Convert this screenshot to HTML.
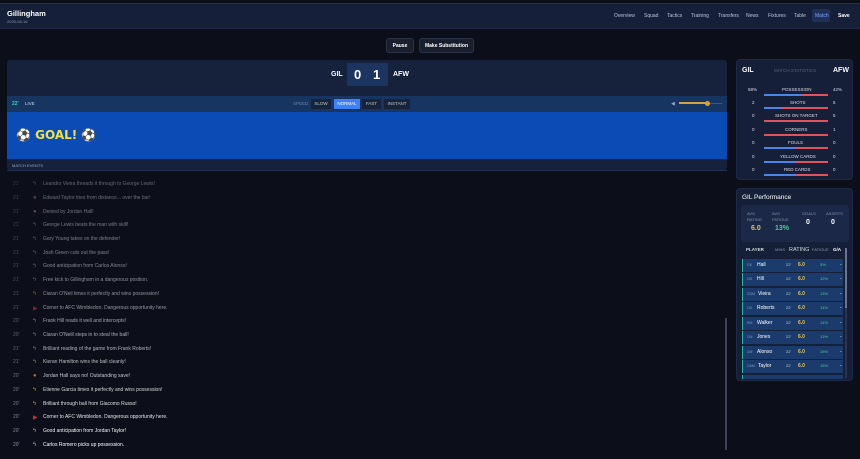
<!DOCTYPE html>
<html><head><style>
*{margin:0;padding:0;box-sizing:border-box}
body{width:860px;height:459px;background:#0c0f1a;font-family:"Liberation Sans",sans-serif;color:#fff;position:relative;overflow:hidden;font-size:5px}
.abs{position:absolute}
.hdr{left:0;top:3px;width:860px;height:26px;background:#161f38;border-top:1px solid #22304f;border-bottom:1px solid #1d2742}
.nav{position:absolute;top:9px;font-size:5px;color:#b8c3d8}
.btn{top:38px;height:15px;background:#1a1f2e;border:1px solid #2a3246;border-radius:3px;font-size:5px;font-weight:bold;text-align:center;line-height:14px}
.main{left:7px;top:60px;width:720px;height:110px;background:#16213b;border-radius:3px}
.ev{position:absolute;left:13px;font-size:5px;white-space:nowrap}
.ev .t{position:absolute;left:0;color:#8a93a6}
.ev .i{position:absolute;left:20px;color:#d9b04a;font-size:6px}
.ev .x{position:absolute;left:30px}
.panel{background:#161f38;border-radius:4px;border:1px solid #1f2a45}
.st{position:absolute;left:0;width:117px;font-size:4.5px;color:#dde}
.bar{position:absolute;left:27px;width:64px;height:2px;background:#e0525e}
.bar i{display:block;height:2px;background:#4a86e8}
.pr{position:absolute;left:5px;width:101px;height:13px;background:#1b3b6c;border-left:1px solid #2bb59c;font-size:5px}
</style></head><body>
<div class="abs hdr">
<div class="abs" style="left:7px;top:5px;font-size:7.5px;font-weight:bold">Gillingham</div>
<div class="abs" style="left:7px;top:15px;font-size:4px;color:#8a93a6">2025-08-16</div>
<span class="nav" style="left:614px">Overview</span><span class="nav" style="left:644px">Squad</span><span class="nav" style="left:667px">Tactics</span><span class="nav" style="left:691px">Training</span><span class="nav" style="left:718px">Transfers</span><span class="nav" style="left:746px">News</span><span class="nav" style="left:768px">Fixtures</span><span class="nav" style="left:794px">Table</span>
<div class="abs" style="left:812px;top:5px;width:18px;height:13px;background:#1f2f55;border-radius:2px"></div>
<span class="nav" style="left:815px;color:#7fa8ff">Match</span><span class="nav" style="left:838px;color:#fff;font-weight:bold">Save</span>
</div>
<div class="abs btn" style="left:386px;width:28px">Pause</div>
<div class="abs btn" style="left:419px;width:55px">Make Substitution</div>
<div class="abs main"></div>
<div class="abs" style="left:331px;top:71px;font-size:7px;font-weight:bold">GIL</div>
<div class="abs" style="left:347px;top:63px;width:41px;height:23px;background:#1b3560"></div>
<div class="abs" style="left:354px;top:67px;font-size:13px;font-weight:bold">0</div>
<div class="abs" style="left:366px;top:72px;font-size:4px;color:#8a93a6">-</div>
<div class="abs" style="left:373px;top:67px;font-size:13px;font-weight:bold">1</div>
<div class="abs" style="left:393px;top:71px;font-size:7px;font-weight:bold">AFW</div>
<div class="abs" style="left:7px;top:96px;width:720px;height:16px;background:#173561"></div>
<div class="abs" style="left:12px;top:101px;font-size:5px;color:#3fd1b0;font-weight:bold">22'</div>
<div class="abs" style="left:25px;top:101px;font-size:4.5px;color:#cfd8ea">LIVE</div>
<div class="abs" style="left:293px;top:101px;font-size:4.5px;color:#6f7fa0">SPEED:</div>
<div class="abs" style="left:311px;top:99px;width:20px;height:10px;background:#18223a;font-size:4.5px;line-height:10px;text-align:center;color:#bcc">SLOW</div>
<div class="abs" style="left:334px;top:99px;width:26px;height:10px;background:#3b82f6;font-size:4.5px;line-height:10px;text-align:center">NORMAL</div>
<div class="abs" style="left:362px;top:99px;width:19px;height:10px;background:#18223a;font-size:4.5px;line-height:10px;text-align:center;color:#bcc">FAST</div>
<div class="abs" style="left:384px;top:99px;width:26px;height:10px;background:#18223a;font-size:4.5px;line-height:10px;text-align:center;color:#bcc">INSTANT</div>
<div class="abs" style="left:671px;top:101px;font-size:5px;color:#9ab">◀</div>
<div class="abs" style="left:679px;top:103px;width:43px;height:1px;background:#4a5570"></div>
<div class="abs" style="left:679px;top:102px;width:29px;height:2px;background:#d9a040"></div>
<div class="abs" style="left:705px;top:101px;width:5px;height:5px;border-radius:50%;background:#e0a030"></div>
<div class="abs" style="left:7px;top:112px;width:720px;height:47px;background:#0a4bb5"></div>
<div class="abs" style="left:16px;top:128px;font-size:12px;font-weight:bold;color:#f2e24a;font-family:'DejaVu Sans',sans-serif">⚽ GOAL! ⚽</div>
<div class="abs" style="left:12px;top:163px;font-size:4px;color:#9aa8c2">MATCH EVENTS</div>
<div class="abs" style="left:7px;top:170px;width:720px;height:1px;background:#22304f"></div>
<div class="abs" style="left:725px;top:318px;width:2px;height:132px;background:#3a4258"></div>
<div style="position:absolute;left:0;top:0">
<div class="ev" style="top:181px;opacity:.35"><span class="t">21'</span><span class="i">ϟ</span><span class="x">Leandro Vieira threads it through to George Lewis!</span></div>
<div class="ev" style="top:195px;opacity:.38"><span class="t">21'</span><span class="i" style="color:#c96">●</span><span class="x">Edward Taylor tries from distance... over the bar!</span></div>
<div class="ev" style="top:209px;opacity:.4"><span class="t">21'</span><span class="i" style="color:#c96">●</span><span class="x">Denied by Jordan Hall!</span></div>
<div class="ev" style="top:222px;opacity:.42"><span class="t">21'</span><span class="i">ϟ</span><span class="x">George Lewis beats the man with skill!</span></div>
<div class="ev" style="top:236px;opacity:.44"><span class="t">21'</span><span class="i">ϟ</span><span class="x">Gary Young takes on the defender!</span></div>
<div class="ev" style="top:250px;opacity:.46"><span class="t">21'</span><span class="i">ϟ</span><span class="x">Josh Green cuts out the pass!</span></div>
<div class="ev" style="top:263px;opacity:.48"><span class="t">21'</span><span class="i">ϟ</span><span class="x">Good anticipation from Carlos Alonso!</span></div>
<div class="ev" style="top:277px;opacity:.5"><span class="t">21'</span><span class="i">ϟ</span><span class="x">Free kick to Gillingham in a dangerous position.</span></div>
<div class="ev" style="top:291px;opacity:.52"><span class="t">21'</span><span class="i">ϟ</span><span class="x">Ciaran O'Neil times it perfectly and wins possession!</span></div>
<div class="ev" style="top:305px;opacity:.55"><span class="t">21'</span><span class="i" style="color:#d33">▶</span><span class="x">Corner to AFC Wimbledon. Dangerous opportunity here.</span></div>
<div class="ev" style="top:318px;opacity:.6"><span class="t">20'</span><span class="i">ϟ</span><span class="x">Frank Hill reads it well and intercepts!</span></div>
<div class="ev" style="top:332px;opacity:.63"><span class="t">20'</span><span class="i">ϟ</span><span class="x">Ciaran O'Neill steps in to steal the ball!</span></div>
<div class="ev" style="top:346px;opacity:.66"><span class="t">21'</span><span class="i">ϟ</span><span class="x">Brilliant reading of the game from Frank Roberts!</span></div>
<div class="ev" style="top:359px;opacity:.7"><span class="t">21'</span><span class="i">ϟ</span><span class="x">Kieran Hamilton wins the ball cleanly!</span></div>
<div class="ev" style="top:373px;opacity:.75"><span class="t">20'</span><span class="i" style="color:#c96">●</span><span class="x">Jordan Hall says no! Outstanding save!</span></div>
<div class="ev" style="top:387px;opacity:.8"><span class="t">20'</span><span class="i">ϟ</span><span class="x">Etienne Garcia times it perfectly and wins possession!</span></div>
<div class="ev" style="top:401px;opacity:.85"><span class="t">20'</span><span class="i">ϟ</span><span class="x">Brilliant through ball from Giacomo Russo!</span></div>
<div class="ev" style="top:414px;opacity:.9"><span class="t">20'</span><span class="i" style="color:#d33">▶</span><span class="x">Corner to AFC Wimbledon. Dangerous opportunity here.</span></div>
<div class="ev" style="top:428px;opacity:.95"><span class="t">20'</span><span class="i">ϟ</span><span class="x">Good anticipation from Jordan Taylor!</span></div>
<div class="ev" style="top:442px"><span class="t">20'</span><span class="i">ϟ</span><span class="x">Carlos Romero picks up possession.</span></div>
</div>
<div class="abs panel" style="left:736px;top:59px;width:117px;height:121px">
<div class="abs" style="left:5px;top:7px;font-size:7px;font-weight:bold">GIL</div>
<div class="abs" style="left:37px;top:8px;font-size:4.5px;color:#55617e">MATCH STATISTICS</div>
<div class="abs" style="left:96px;top:7px;font-size:7px;font-weight:bold">AFW</div>
<div class="st" style="top:27px"><span class="abs" style="left:11px">58%</span><span class="abs" style="left:45px">POSSESSION</span><span class="abs" style="left:96px">42%</span></div><div class="bar" style="top:34px"><i style="width:58%"></i></div>
<div class="st" style="top:40px"><span class="abs" style="left:15px">2</span><span class="abs" style="left:53px">SHOTS</span><span class="abs" style="left:96px">5</span></div><div class="bar" style="top:47px"><i style="width:28%"></i></div>
<div class="st" style="top:53px"><span class="abs" style="left:15px">0</span><span class="abs" style="left:38px">SHOTS ON TARGET</span><span class="abs" style="left:96px">5</span></div><div class="bar" style="top:60px"><i style="width:0"></i></div>
<div class="st" style="top:67px"><span class="abs" style="left:15px">0</span><span class="abs" style="left:48px">CORNERS</span><span class="abs" style="left:96px">1</span></div><div class="bar" style="top:74px"><i style="width:0"></i></div>
<div class="st" style="top:80px"><span class="abs" style="left:15px">0</span><span class="abs" style="left:51px">FOULS</span><span class="abs" style="left:96px">0</span></div><div class="bar" style="top:87px"><i style="width:50%"></i></div>
<div class="st" style="top:94px"><span class="abs" style="left:15px">0</span><span class="abs" style="left:43px">YELLOW CARDS</span><span class="abs" style="left:96px">0</span></div><div class="bar" style="top:101px"><i style="width:50%"></i></div>
<div class="st" style="top:107px"><span class="abs" style="left:15px">0</span><span class="abs" style="left:47px">RED CARDS</span><span class="abs" style="left:96px">0</span></div><div class="bar" style="top:114px"><i style="width:50%"></i></div>
</div>
<div class="abs panel" style="left:736px;top:188px;width:117px;height:193px">
<div class="abs" style="left:5px;top:5px;font-size:6.5px">GIL Performance</div>
<div class="abs" style="left:4px;top:16px;width:108px;height:37px;background:#1b2848;border-radius:3px"></div>
<div class="abs" style="left:10px;top:22px;font-size:4px;color:#8a93a6;line-height:6px">AVG<br>RATING</div>
<div class="abs" style="left:14px;top:36px;font-size:7px;font-weight:bold;color:#e8c44a">6.0</div>
<div class="abs" style="left:35px;top:22px;font-size:4px;color:#8a93a6;line-height:6px">AVG<br>FATIGUE</div>
<div class="abs" style="left:38px;top:36px;font-size:7px;font-weight:bold;color:#3fd68f">13%</div>
<div class="abs" style="left:65px;top:22px;font-size:4px;color:#8a93a6">GOALS</div>
<div class="abs" style="left:69px;top:30px;font-size:7px;font-weight:bold">0</div>
<div class="abs" style="left:89px;top:22px;font-size:4px;color:#8a93a6">ASSISTS</div>
<div class="abs" style="left:94px;top:30px;font-size:7px;font-weight:bold">0</div>
<div class="abs" style="left:9px;top:58px;font-size:4.5px;font-weight:bold;color:#cdd">PLAYER</div>
<div class="abs" style="left:38px;top:58px;font-size:4px;color:#8a93a6">MINS</div>
<div class="abs" style="left:52px;top:58px;font-size:5.5px;color:#cdd">RATING</div>
<div class="abs" style="left:75px;top:58px;font-size:4px;color:#8a93a6">FATIGUE</div>
<div class="abs" style="left:96px;top:58px;font-size:4.5px;font-weight:bold">G/A</div>
<div class="abs" style="left:108px;top:59px;width:2px;height:130px;background:#2c3550"></div>
<div class="abs" style="left:108px;top:59px;width:2px;height:60px;background:#6a7390"></div>
<div style="position:absolute;left:0;top:0;font-size:5px">
<div class="pr" style="top:70px"><span class="abs" style="left:4px;top:4px;font-size:3.5px;color:#7fa0c8">GK</span><span class="abs" style="left:14px;top:3px">Hall</span><span class="abs" style="left:43px;top:3px;font-size:4px;color:#bcd">22'</span><span class="abs" style="left:55px;top:3px;color:#e8c44a;font-weight:bold">6.0</span><span class="abs" style="left:77px;top:3px;font-size:4px;color:#3fd68f">3%</span><span class="abs" style="left:97px;top:3px">-</span></div>
<div class="pr" style="top:84px"><span class="abs" style="left:4px;top:4px;font-size:3.5px;color:#7fa0c8">CB</span><span class="abs" style="left:14px;top:3px">Hill</span><span class="abs" style="left:43px;top:3px;font-size:4px;color:#bcd">22'</span><span class="abs" style="left:55px;top:3px;color:#e8c44a;font-weight:bold">6.0</span><span class="abs" style="left:77px;top:3px;font-size:4px;color:#3fd68f">12%</span><span class="abs" style="left:97px;top:3px">-</span></div>
<div class="pr" style="top:99px"><span class="abs" style="left:4px;top:4px;font-size:3.5px;color:#7fa0c8">CDM</span><span class="abs" style="left:15px;top:3px">Vieira</span><span class="abs" style="left:43px;top:3px;font-size:4px;color:#bcd">22'</span><span class="abs" style="left:55px;top:3px;color:#e8c44a;font-weight:bold">6.0</span><span class="abs" style="left:77px;top:3px;font-size:4px;color:#3fd68f">13%</span><span class="abs" style="left:97px;top:3px">-</span></div>
<div class="pr" style="top:113px"><span class="abs" style="left:4px;top:4px;font-size:3.5px;color:#7fa0c8">CB</span><span class="abs" style="left:14px;top:3px">Roberts</span><span class="abs" style="left:43px;top:3px;font-size:4px;color:#bcd">22'</span><span class="abs" style="left:55px;top:3px;color:#e8c44a;font-weight:bold">6.0</span><span class="abs" style="left:77px;top:3px;font-size:4px;color:#3fd68f">14%</span><span class="abs" style="left:97px;top:3px">-</span></div>
<div class="pr" style="top:128px"><span class="abs" style="left:4px;top:4px;font-size:3.5px;color:#7fa0c8">RM</span><span class="abs" style="left:14px;top:3px">Walker</span><span class="abs" style="left:43px;top:3px;font-size:4px;color:#bcd">22'</span><span class="abs" style="left:55px;top:3px;color:#e8c44a;font-weight:bold">6.0</span><span class="abs" style="left:77px;top:3px;font-size:4px;color:#3fd68f">14%</span><span class="abs" style="left:97px;top:3px">-</span></div>
<div class="pr" style="top:142px"><span class="abs" style="left:4px;top:4px;font-size:3.5px;color:#7fa0c8">CM</span><span class="abs" style="left:14px;top:3px">Jones</span><span class="abs" style="left:43px;top:3px;font-size:4px;color:#bcd">22'</span><span class="abs" style="left:55px;top:3px;color:#e8c44a;font-weight:bold">6.0</span><span class="abs" style="left:77px;top:3px;font-size:4px;color:#3fd68f">13%</span><span class="abs" style="left:97px;top:3px">-</span></div>
<div class="pr" style="top:157px"><span class="abs" style="left:4px;top:4px;font-size:3.5px;color:#7fa0c8">CM</span><span class="abs" style="left:14px;top:3px">Alonso</span><span class="abs" style="left:43px;top:3px;font-size:4px;color:#bcd">22'</span><span class="abs" style="left:55px;top:3px;color:#e8c44a;font-weight:bold">6.0</span><span class="abs" style="left:77px;top:3px;font-size:4px;color:#3fd68f">15%</span><span class="abs" style="left:97px;top:3px">-</span></div>
<div class="pr" style="top:171px"><span class="abs" style="left:4px;top:4px;font-size:3.5px;color:#7fa0c8">CAM</span><span class="abs" style="left:15px;top:3px">Taylor</span><span class="abs" style="left:43px;top:3px;font-size:4px;color:#bcd">22'</span><span class="abs" style="left:55px;top:3px;color:#e8c44a;font-weight:bold">6.0</span><span class="abs" style="left:77px;top:3px;font-size:4px;color:#3fd68f">15%</span><span class="abs" style="left:97px;top:3px">-</span></div>
<div class="pr" style="top:186px;height:4px"></div>
</div>
</div>
</body></html>
